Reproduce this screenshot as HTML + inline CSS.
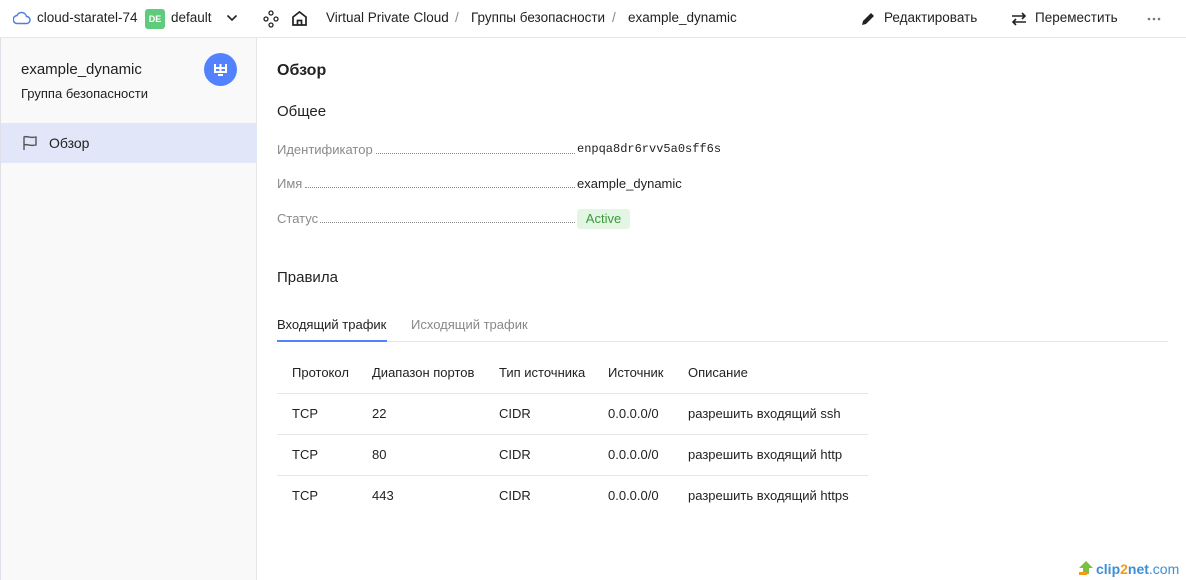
<!DOCTYPE html>
<html><head><meta charset="utf-8"><style>
*{box-sizing:border-box;margin:0;padding:0}
body{width:1186px;height:580px;overflow:hidden;background:#fff;font-family:"Liberation Sans",sans-serif;font-size:13px;color:#222;position:relative}
.abs{position:absolute;white-space:nowrap}
.top{position:absolute;left:0;top:0;width:1186px;height:38px;border-bottom:1px solid #e6e6e6}
.top .abs{font-size:13.5px}
.side{position:absolute;left:0;top:38px;width:257px;height:542px;background:#f9f9f9;border-right:1px solid #e6e6e6;border-left:1px solid #e0e0e8}
.dots{position:absolute;border-bottom:1px dotted #888;height:1px}
.lbl{color:#8a8a8a}
.hr{position:absolute;height:1px;background:#e6e6e6}
</style></head><body>
<div class="top">
<svg class="abs" style="left:13px;top:11px" width="18" height="14" viewBox="0 0 18 14"><path d="M4.5 12.5h9a3.5 3.5 0 0 0 0-7 5 5 0 0 0-9.5-1A4 4 0 0 0 4.5 12.5z" fill="none" stroke="#4a7fe8" stroke-width="1.5"/></svg>
<div class="abs" style="left:37px;top:10px">cloud-staratel-74</div>
<div class="abs" style="left:145px;top:9px;width:20px;height:20px;background:#5fcc7c;border-radius:3px;color:#fff;font-size:9px!important;font-weight:bold;text-align:center;line-height:20px">DE</div>
<div class="abs" style="left:171px;top:10px">default</div>
<svg class="abs" style="left:226px;top:13px" width="12" height="10"><path d="M1.5 2.5l4.5 4.5 4.5-4.5" fill="none" stroke="#222" stroke-width="1.6"/></svg>
<svg class="abs" style="left:263px;top:10px" width="16" height="18" viewBox="0 0 16 18" fill="none" stroke="#222" stroke-width="1.3"><circle cx="8" cy="3" r="2"/><circle cx="3" cy="9" r="2"/><circle cx="13" cy="9" r="2"/><circle cx="8" cy="15" r="2"/></svg>
<svg class="abs" style="left:291px;top:10px" width="17" height="17" viewBox="0 0 17 17" fill="none" stroke="#222" stroke-width="1.7"><path d="M2 15V7l6.5-5L15 7v8zM6.5 15v-4.5h4V15"/></svg>
<div class="abs" style="left:326px;top:10px">Virtual Private Cloud</div>
<div class="abs" style="left:455px;top:10px;color:#888">/</div>
<div class="abs" style="left:471px;top:10px">Группы безопасности</div>
<div class="abs" style="left:612px;top:10px;color:#888">/</div>
<div class="abs" style="left:628px;top:10px">example_dynamic</div>
<svg class="abs" style="left:860px;top:11px" width="16" height="16" viewBox="0 0 16 16"><path d="M2 14l1-4 8-8 3 3-8 8z" fill="#222"/></svg>
<div class="abs" style="left:884px;top:10px">Редактировать</div>
<svg class="abs" style="left:1011px;top:11px" width="16" height="16" viewBox="0 0 16 16" fill="none" stroke="#222" stroke-width="1.6"><path d="M1 5h13M11 2l3 3-3 3M15 11H2M5 8l-3 3 3 3"/></svg>
<div class="abs" style="left:1035px;top:10px">Переместить</div>
<svg class="abs" style="left:1147px;top:17px" width="14" height="4"><circle cx="2" cy="2" r="1.3" fill="#777"/><circle cx="7" cy="2" r="1.3" fill="#777"/><circle cx="12" cy="2" r="1.3" fill="#777"/></svg>
</div>
<div class="side">
<div class="abs" style="left:20px;top:23px;font-size:15px">example_dynamic</div>
<div class="abs" style="left:20px;top:48px;font-size:13px">Группа безопасности</div>
<div class="abs" style="left:203px;top:15px;width:33px;height:33px;border-radius:50%;background:#5282ff"><svg width="33" height="33" viewBox="0 0 33 33" fill="none" stroke="#fff" stroke-width="2"><path d="M11 11v8h11v-8M16.5 11v8M12 15h9M14 22h5"/></svg></div>
<div class="abs" style="left:0;top:85px;width:256px;height:40px;background:#e1e6f8"></div>
<svg class="abs" style="left:21px;top:97px" width="16" height="16" viewBox="0 0 16 16" fill="none" stroke="#555" stroke-width="1.4"><path d="M2 15V2c3-1.5 6 1.5 12 0v8c-6 1.5-9-1.5-12 0"/></svg>
<div class="abs" style="left:48px;top:97px;font-size:14px">Обзор</div>
</div>
<div class="abs" style="left:277px;top:62px;font-size:16px;font-weight:bold">Обзор</div>
<div class="abs" style="left:277px;top:103px;font-size:15px">Общее</div>
<div class="abs lbl" style="left:277px;top:142px">Идентификатор</div><div class="dots" style="left:376px;top:153px;width:199px"></div>
<div class="abs" style="left:577px;top:142px;font-family:'Liberation Mono',monospace;font-size:12px">enpqa8dr6rvv5a0sff6s</div>
<div class="abs lbl" style="left:277px;top:176px">Имя</div><div class="dots" style="left:305px;top:187px;width:270px"></div>
<div class="abs" style="left:577px;top:176px">example_dynamic</div>
<div class="abs lbl" style="left:277px;top:211px">Статус</div><div class="dots" style="left:320px;top:222px;width:255px"></div>
<div class="abs" style="left:577px;top:209px;width:53px;height:20px;background:#e3f6e3;border-radius:3px;color:#3b9a3b;text-align:center;line-height:20px">Active</div>
<div class="abs" style="left:277px;top:269px;font-size:15px">Правила</div>
<div class="abs" style="left:277px;top:317px">Входящий трафик</div>
<div class="abs" style="left:411px;top:317px;color:#888">Исходящий трафик</div>
<div class="hr" style="left:277px;top:341px;width:891px"></div>
<div class="abs" style="left:277px;top:340px;width:110px;height:2px;background:#5282ff"></div>
<div class="abs" style="left:292px;top:365px">Протокол</div>
<div class="abs" style="left:372px;top:365px">Диапазон портов</div>
<div class="abs" style="left:499px;top:365px">Тип источника</div>
<div class="abs" style="left:608px;top:365px">Источник</div>
<div class="abs" style="left:688px;top:365px">Описание</div>
<div class="hr" style="left:277px;top:393px;width:591px"></div>
<div class="abs" style="left:292px;top:406px">TCP</div><div class="abs" style="left:372px;top:406px">22</div><div class="abs" style="left:499px;top:406px">CIDR</div><div class="abs" style="left:608px;top:406px">0.0.0.0/0</div><div class="abs" style="left:688px;top:406px">разрешить входящий ssh</div>
<div class="hr" style="left:277px;top:434px;width:591px"></div>
<div class="abs" style="left:292px;top:447px">TCP</div><div class="abs" style="left:372px;top:447px">80</div><div class="abs" style="left:499px;top:447px">CIDR</div><div class="abs" style="left:608px;top:447px">0.0.0.0/0</div><div class="abs" style="left:688px;top:447px">разрешить входящий http</div>
<div class="hr" style="left:277px;top:475px;width:591px"></div>
<div class="abs" style="left:292px;top:488px">TCP</div><div class="abs" style="left:372px;top:488px">443</div><div class="abs" style="left:499px;top:488px">CIDR</div><div class="abs" style="left:608px;top:488px">0.0.0.0/0</div><div class="abs" style="left:688px;top:488px">разрешить входящий https</div>
<svg class="abs" style="left:1078px;top:560px" width="16" height="16"><path d="M8 1l7 7h-4v6H5V8H1z" fill="#7ac043"/><rect x="1" y="12" width="8" height="3" fill="#f29b1d"/></svg>
<div class="abs" style="left:1096px;top:561px;font-size:14px;color:#3a8fd8;font-weight:bold">clip<span style="color:#f29b1d">2</span>net<span style="font-weight:normal">.com</span></div>
</body></html>
